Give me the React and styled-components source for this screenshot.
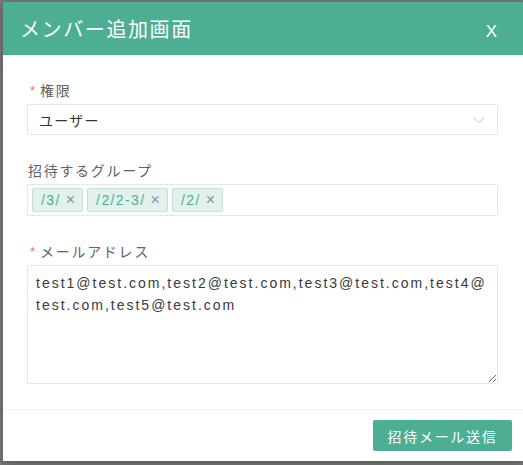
import React from 'react';
import styled, { createGlobalStyle } from 'styled-components';

const GlobalStyle = createGlobalStyle`
  html, body {
    margin: 0;
    padding: 0;
    background: #6f6f6f;
  }
  body {
    font-family: Arial, "Liberation Sans", "Noto Sans CJK JP", sans-serif;
  }
  * {
    box-sizing: border-box;
  }
`;

const GREEN = '#4caf93';
const CJK = `"Liberation Sans", "Noto Sans CJK JP", sans-serif`;

const Overlay = styled.div`
  width: 523px;
  height: 465px;
  overflow: hidden;
  padding: 2px 0 0 3px;
  background: #7a7a7a;
`;

const Modal = styled.div`
  width: 520px;
  background: #fff;
  box-shadow: 0 2px 10px rgba(0, 0, 0, 0.35);
`;

const Header = styled.div`
  height: 53px;
  display: flex;
  align-items: center;
  justify-content: space-between;
  padding: 0 26px 0 17px;
  background: ${GREEN};
  color: #fff;
`;

const Title = styled.h2`
  margin: 0;
  font-family: ${CJK};
  font-size: 20px;
  font-weight: 400;
  letter-spacing: 1.6px;
`;

const CloseButton = styled.button`
  background: none;
  border: none;
  padding: 0;
  color: #fff;
  font-family: "Liberation Sans", Arial, sans-serif;
  font-size: 17px;
  line-height: 1;
  cursor: pointer;
  margin-top: 5px;
`;

const Body = styled.div`
  padding: 23px 25px 25px 24px;
`;

const FormItem = styled.div`
  margin-bottom: ${(p) => (p.$last ? 0 : 23)}px;
`;

const Label = styled.label`
  display: flex;
  align-items: center;
  height: 24px;
  margin-bottom: 2px;
  padding-left: ${(p) => (p.$required ? 3 : 1)}px;
  font-family: ${CJK};
  font-size: 14px;
  color: #606266;
  letter-spacing: 1.7px;
`;

const Star = styled.span`
  color: #f56c6c;
  margin-right: 5px;
  font-size: 13px;
  letter-spacing: 0;
`;

const Select = styled.div`
  height: 31px;
  display: flex;
  align-items: center;
  justify-content: space-between;
  padding: 0 12px 0 11px;
  border: 1px solid #e4e6ea;
  border-radius: 2px;
  font-family: ${CJK};
  font-size: 14px;
  color: #333;
  letter-spacing: 1.3px;
`;

const TagBox = styled.div`
  min-height: 31px;
  display: flex;
  flex-wrap: wrap;
  align-items: center;
  gap: 4px;
  padding: 3px 4px;
  border: 1px solid #e4e6ea;
  border-radius: 2px;
`;

const Tag = styled.span`
  height: 24px;
  display: inline-flex;
  align-items: center;
  gap: 5px;
  padding: 0 7px 0 8px;
  background: #e2f1ec;
  border: 1px solid #c3e1d6;
  border-radius: 2px;
  color: ${GREEN};
  font-size: 14px;
  letter-spacing: 1.4px;
`;

const TagClose = styled.span`
  color: #8e9196;
  font-size: 16px;
  font-weight: 300;
  letter-spacing: 0;
  line-height: 1;
`;

const TextArea = styled.textarea`
  display: block;
  width: 100%;
  height: 119px;
  margin: 0;
  padding: 6px 8px;
  border: 1px solid #e4e6ea;
  border-radius: 2px;
  resize: vertical;
  font-family: "Liberation Sans", Arial, sans-serif;
  font-size: 14px;
  line-height: 22px;
  letter-spacing: 2px;
  color: #3a3a3a;
  outline: none;
`;

const Footer = styled.div`
  display: flex;
  justify-content: flex-end;
  padding: 10px 11px 10px 0;
  border-top: 1px solid #ebeef2;
`;

const SubmitButton = styled.button`
  width: 139px;
  height: 31px;
  border: none;
  border-radius: 2px;
  background: ${GREEN};
  color: #fff;
  font-family: ${CJK};
  font-size: 14px;
  letter-spacing: 1.7px;
  cursor: pointer;
`;

const groups = ['/3/', '/2/2-3/', '/2/'];
const emails = 'test1@test.com,test2@test.com,test3@test.com,test4@test.com,test5@test.com';

export default function App() {
  return (
    <>
      <GlobalStyle />
      <Overlay>
        <Modal>
          <Header>
            <Title>メンバー追加画面</Title>
            <CloseButton>X</CloseButton>
          </Header>
          <Body>
            <FormItem>
              <Label $required>
                <Star>*</Star>権限
              </Label>
              <Select>
                <span>ユーザー</span>
                <svg width="12" height="6" viewBox="0 0 12 6" fill="none">
                  <polyline points="0.5,0.5 6,5.5 11.5,0.5" stroke="#c0c4cc" strokeWidth="1" />
                </svg>
              </Select>
            </FormItem>
            <FormItem>
              <Label>招待するグループ</Label>
              <TagBox>
                {groups.map((g) => (
                  <Tag key={g}>
                    {g}
                    <TagClose>×</TagClose>
                  </Tag>
                ))}
              </TagBox>
            </FormItem>
            <FormItem $last>
              <Label $required>
                <Star>*</Star>メールアドレス
              </Label>
              <TextArea defaultValue={emails} />
            </FormItem>
          </Body>
          <Footer>
            <SubmitButton>招待メール送信</SubmitButton>
          </Footer>
        </Modal>
      </Overlay>
    </>
  );
}
